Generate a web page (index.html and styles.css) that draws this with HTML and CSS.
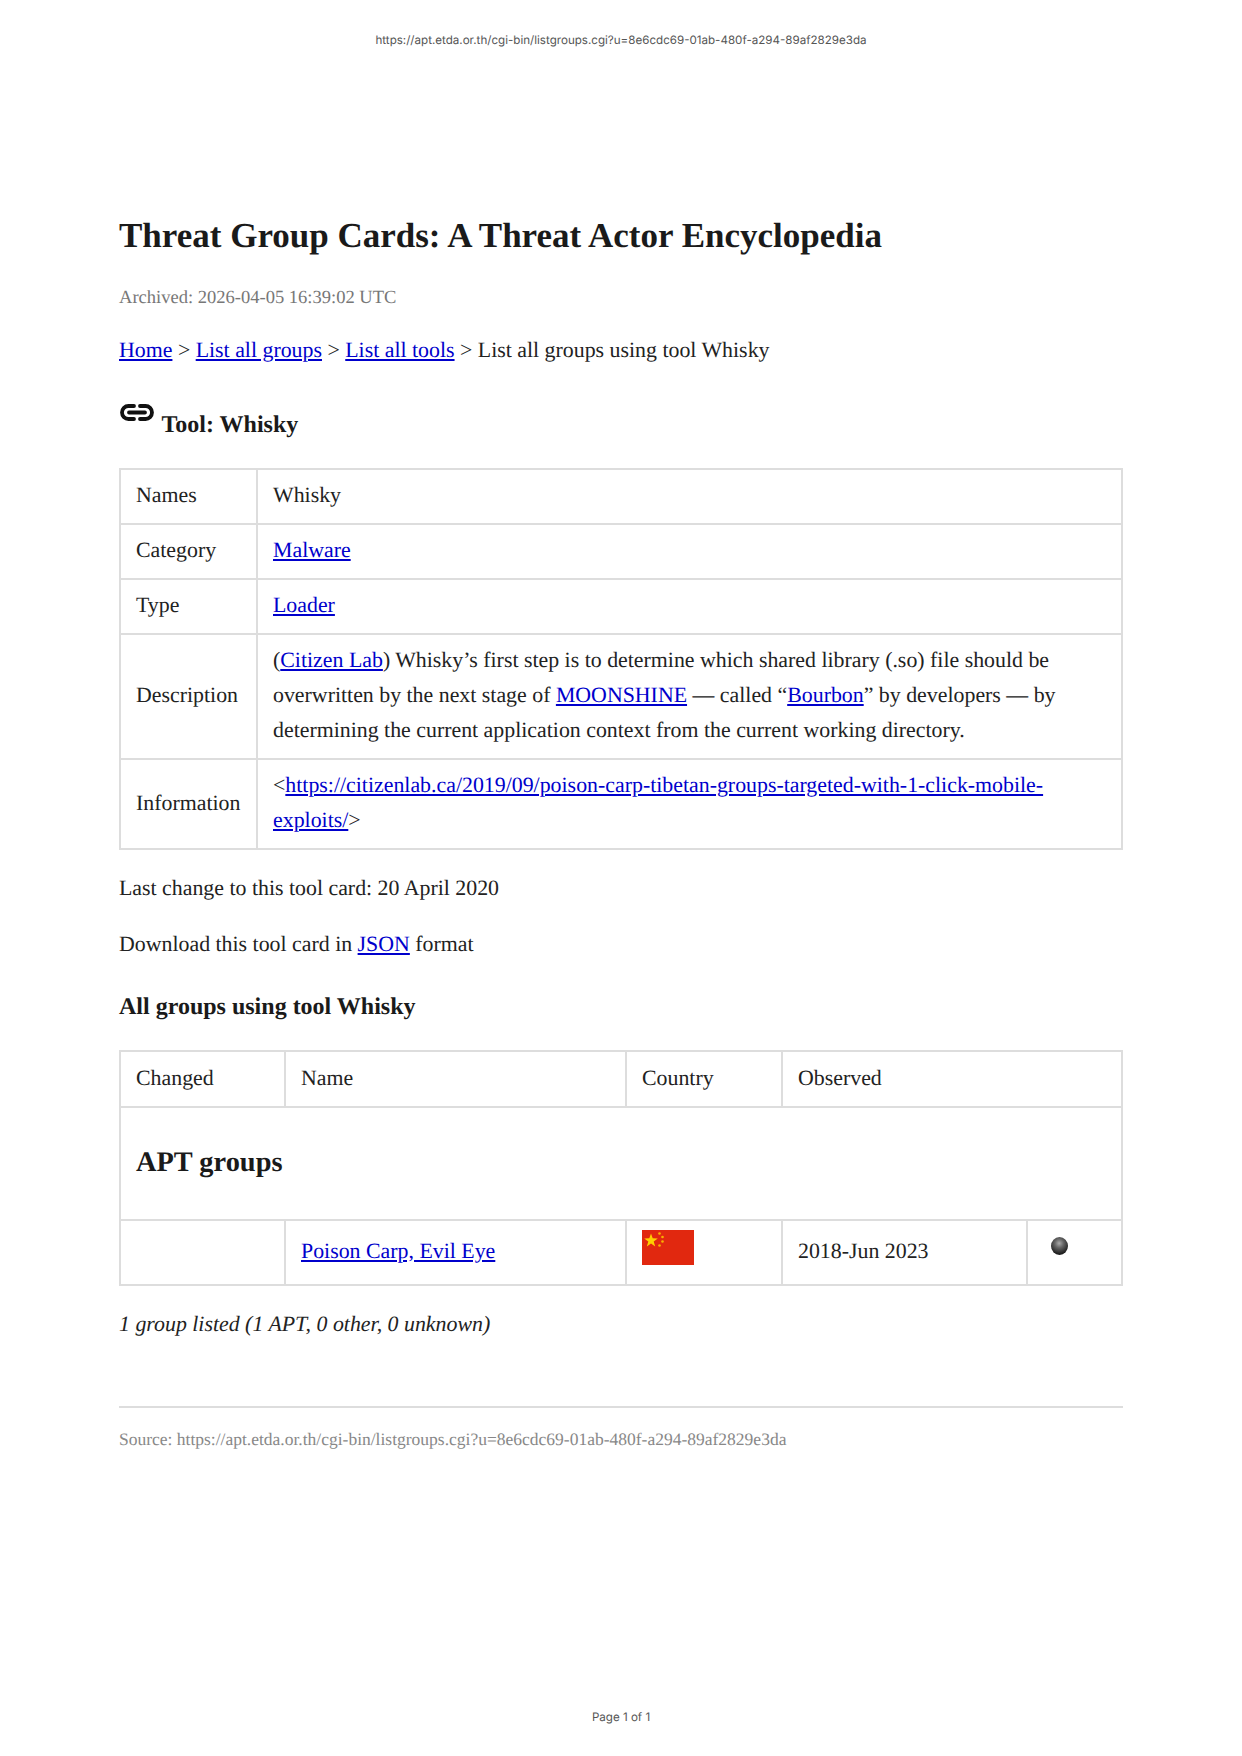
FILE: index.html
```html
<!DOCTYPE html>
<html lang="en">
<head>
<meta charset="utf-8">
<title>Threat Group Cards</title>
<link rel="stylesheet" href="styles.css">
</head>
<body>
<div class="sheet">
  <header class="page-head">https://apt.etda.or.th/cgi-bin/listgroups.cgi?u=8e6cdc69-01ab-480f-a294-89af2829e3da</header>
  <main class="content">
    <h1 class="title">Threat Group Cards: A Threat Actor Encyclopedia</h1>
    <p class="archived">Archived: 2026-04-05 16:39:02 UTC</p>
    <p class="crumbs"><a href="#">Home</a> &gt; <a href="#">List all groups</a> &gt; <a href="#">List all tools</a> &gt; List all groups using tool Whisky</p>
    <h2 class="tool-head"><svg class="link-icon" viewBox="0 0 36 20" width="36" height="20" aria-hidden="true"><path d="M15 3H9.500a6.500 6.500 0 0 0 0 13H15M21 3h5.500a6.500 6.500 0 0 1 0 13H21M10 9.500h16" fill="none" stroke="#111" stroke-width="3.800" stroke-linecap="round"/></svg> Tool: Whisky</h2>
    <table class="info">
      <colgroup><col class="info-k"><col></colgroup>
      <tr><td>Names</td><td>Whisky</td></tr>
      <tr><td>Category</td><td><a href="#">Malware</a></td></tr>
      <tr><td>Type</td><td><a href="#">Loader</a></td></tr>
      <tr><td>Description</td><td>(<a href="#">Citizen Lab</a>) Whisky’s first step is to determine which shared library (.so) file should be overwritten by the next stage of <a href="#">MOONSHINE</a> — called “<a href="#">Bourbon</a>” by developers — by determining the current application context from the current working directory.</td></tr>
      <tr><td>Information</td><td>&lt;<a href="#">https://citizenlab.ca/2019/09/poison-carp-tibetan-groups-targeted-with-1-click-mobile-exploits/</a>&gt;</td></tr>
    </table>
    <p class="change">Last change to this tool card: 20 April 2020</p>
    <p class="download">Download this tool card in <a href="#">JSON</a> format</p>
    <h3 class="groups-head">All groups using tool Whisky</h3>
    <table class="groups">
      <colgroup><col class="c1"><col class="c2"><col class="c3"><col class="c4"><col class="c5"></colgroup>
      <tr class="g-head"><td>Changed</td><td>Name</td><td>Country</td><td colspan="2">Observed</td></tr>
      <tr class="g-section"><td colspan="5"><h2 class="section-title">APT groups</h2></td></tr>
      <tr class="g-row">
        <td></td>
        <td><a href="#">Poison Carp, Evil Eye</a></td>
        <td class="flag-cell"><svg class="flag" viewBox="0 0 52 35" width="52" height="35" aria-hidden="true"><rect width="52" height="35" fill="#e1280f"/><polygon points="9,3.500 10.700,8.300 15.800,8.400 11.700,11.500 13.200,16.400 9,13.500 4.800,16.400 6.300,11.500 2.200,8.400 7.300,8.300" fill="#ffd000"/><circle cx="17.500" cy="3.500" r="1.300" fill="#f9b000"/><circle cx="20.500" cy="7" r="1.300" fill="#f9b000"/><circle cx="20.500" cy="11.500" r="1.300" fill="#f9b000"/><circle cx="17.500" cy="15.500" r="1.300" fill="#f9b000"/></svg></td>
        <td>2018-Jun 2023</td>
        <td class="ball-cell"><span class="ball"></span></td>
      </tr>
    </table>
    <p class="count">1 group listed (1 APT, 0 other, 0 unknown)</p>
    <hr class="rule">
    <p class="source">Source: https://apt.etda.or.th/cgi-bin/listgroups.cgi?u=8e6cdc69-01ab-480f-a294-89af2829e3da</p>
  </main>
  <footer class="page-foot">Page 1 of 1</footer>
</div>
</body>
</html>
```
FILE: styles.css
```css
* { box-sizing: border-box; }
html, body { margin: 0; padding: 0; background: #fff; }
body { font-family: "Liberation Serif", "Times New Roman", serif; color: #222; font-size: 21.870px; text-rendering: geometricPrecision; }
.sheet { width: 1242px; height: 1756px; display: flex; flex-direction: column; overflow: hidden; }
.page-head { height: 46px; padding-top: 33px; text-align: center; font-family: "Inter", "Liberation Sans", sans-serif; font-size: 11.600px; line-height: 14px; color: #555; }
.content { flex: 1; padding: 169px 119px 0; }
.page-foot { height: 46px; text-align: center; font-family: "Inter", "Liberation Sans", sans-serif; font-size: 11.600px; line-height: 14px; color: #555; }
a { color: #0000cc; text-decoration: underline; }
p { margin: 0; }
.title { margin: 0; font-size: 35px; line-height: 42px; font-weight: 700; color: #1a1a1a; }
.archived { margin-top: 27px; font-size: 18.550px; line-height: 28px; color: #777; }
.crumbs { margin-top: 23px; line-height: 31px; }
.tool-head { margin: 37px 0 0; font-size: 24px; line-height: 36px; font-weight: 700; color: #1a1a1a; }
.link-icon { vertical-align: 9px; margin-right: 1px; }
table { width: 100%; border-collapse: collapse; table-layout: fixed; border: 2px solid #ddd; line-height: 35px; }
td { border: 2px solid #ddd; padding: 8px 15px 10px; }
.info { margin-top: 25px; }
.info-k { width: 137px; }
.change { margin-top: 21px; line-height: 35px; }
.download { margin-top: 21px; line-height: 35px; }
.groups-head { margin: 27px 0 0; font-size: 24px; line-height: 36px; font-weight: 700; color: #1a1a1a; }
.groups { margin-top: 25px; }
.c1 { width: 165px; }
.c2 { width: 341px; }
.c3 { width: 156px; }
.c4 { width: 245px; }
.g-head td { height: 56px; }
.section-title { margin: 0; font-size: 28.400px; line-height: 36px; font-weight: 700; color: #1a1a1a; padding: 29px 0 28px; }
.g-row td { height: 65px; padding-top: 0; padding-bottom: 3px; }
.flag { display: block; margin-top: -7px; }
.ball { display: block; width: 17px; height: 18px; margin: -11px 0 0 8px; border-radius: 50%; background: radial-gradient(circle at 48% 35%, #aaa 0%, #666 30%, #222 70%, #000 100%); }
.count { margin-top: 21px; line-height: 35px; font-style: italic; }
.rule { margin: 64px 0 0; border: 0; border-top: 2px solid #ddd; }
.source { margin-top: 17px; font-size: 17.500px; line-height: 28px; color: #888; }
```
